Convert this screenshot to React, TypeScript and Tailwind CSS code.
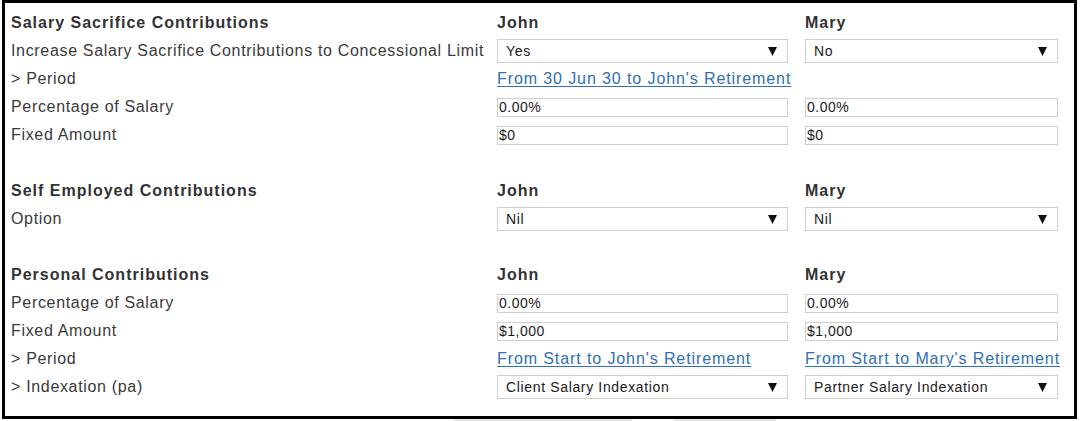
import React from "react"

type Cell =
  | { kind: "head"; text: string }
  | { kind: "select"; value: string }
  | { kind: "input"; value: string }
  | { kind: "link"; text: string }
  | { kind: "empty" }

type Row = { label: string; bold?: boolean; john: Cell; mary: Cell } | null

const rows: Row[] = [
  { label: "Salary Sacrifice Contributions", bold: true, john: { kind: "head", text: "John" }, mary: { kind: "head", text: "Mary" } },
  { label: "Increase Salary Sacrifice Contributions to Concessional Limit", john: { kind: "select", value: "Yes" }, mary: { kind: "select", value: "No" } },
  { label: "> Period", john: { kind: "link", text: "From 30 Jun 30 to John's Retirement" }, mary: { kind: "empty" } },
  { label: "Percentage of Salary", john: { kind: "input", value: "0.00%" }, mary: { kind: "input", value: "0.00%" } },
  { label: "Fixed Amount", john: { kind: "input", value: "$0" }, mary: { kind: "input", value: "$0" } },
  null,
  { label: "Self Employed Contributions", bold: true, john: { kind: "head", text: "John" }, mary: { kind: "head", text: "Mary" } },
  { label: "Option", john: { kind: "select", value: "Nil" }, mary: { kind: "select", value: "Nil" } },
  null,
  { label: "Personal Contributions", bold: true, john: { kind: "head", text: "John" }, mary: { kind: "head", text: "Mary" } },
  { label: "Percentage of Salary", john: { kind: "input", value: "0.00%" }, mary: { kind: "input", value: "0.00%" } },
  { label: "Fixed Amount", john: { kind: "input", value: "$1,000" }, mary: { kind: "input", value: "$1,000" } },
  { label: "> Period", john: { kind: "link", text: "From Start to John's Retirement" }, mary: { kind: "link", text: "From Start to Mary's Retirement" } },
  { label: "> Indexation (pa)", john: { kind: "select", value: "Client Salary Indexation" }, mary: { kind: "select", value: "Partner Salary Indexation" } },
]

function Arrow() {
  return (
    <svg width="9" height="9" viewBox="0 0 9 9" className="shrink-0">
      <polygon points="0,0 9,0 4.5,9" fill="#111" />
    </svg>
  )
}

function CellView({ cell, width }: { cell: Cell; width: string }) {
  if (cell.kind === "head") {
    return <span className="font-bold text-[16px] tracking-[1px] text-[#333]">{cell.text}</span>
  }
  if (cell.kind === "link") {
    return (
      <a href="#" className="text-[16px] tracking-[0.9px] text-[#2f6fb5] underline underline-offset-[2px] whitespace-nowrap">
        {cell.text}
      </a>
    )
  }
  if (cell.kind === "select") {
    return (
      <div className={`${width} h-[24px] border border-[#cfcfcf] bg-white flex items-center justify-between pl-[8px] pr-[10px]`}>
        <span className="text-[14px] tracking-[0.65px] text-[#1a1a1a]">{cell.value}</span>
        <Arrow />
      </div>
    )
  }
  if (cell.kind === "input") {
    return (
      <div className={`${width} h-[19px] border border-[#cfcfcf] bg-white flex items-center pl-[1px]`}>
        <span className="text-[14px] tracking-[0.5px] text-[#1a1a1a]">{cell.value}</span>
      </div>
    )
  }
  return null
}

export default function App() {
  return (
    <div className="bg-white min-h-[421px] overflow-hidden" style={{ fontFamily: '"Liberation Sans", Arial, sans-serif' }}>
      <div className="ml-[2px] w-[1075px] h-[419px] border-[3px] border-black pt-[6px] pl-[6px]">
        {rows.map((row, i) =>
          row === null ? (
            <div key={i} className="h-[28px]" />
          ) : (
            <div key={i} className="h-[28px] grid grid-cols-[486px_308px_1fr] items-center">
              <span
                className={
                  row.bold
                    ? "font-bold text-[16px] tracking-[1px] text-[#333] whitespace-nowrap"
                    : "text-[16px] tracking-[0.67px] text-[#3a3a3a] whitespace-nowrap"
                }
              >
                {row.label}
              </span>
              <div>
                <CellView cell={row.john} width="w-[291px]" />
              </div>
              <div>
                <CellView cell={row.mary} width="w-[253px]" />
              </div>
            </div>
          )
        )}
      </div>
      <div className="flex">
        <div className="ml-[453px] w-[180px] h-[10px] bg-[#e6e6e6] rounded-t-[3px]" />
        <div className="ml-[40px] w-[104px] h-[10px] bg-[#e6e6e6] rounded-t-[3px]" />
      </div>
    </div>
  )
}
